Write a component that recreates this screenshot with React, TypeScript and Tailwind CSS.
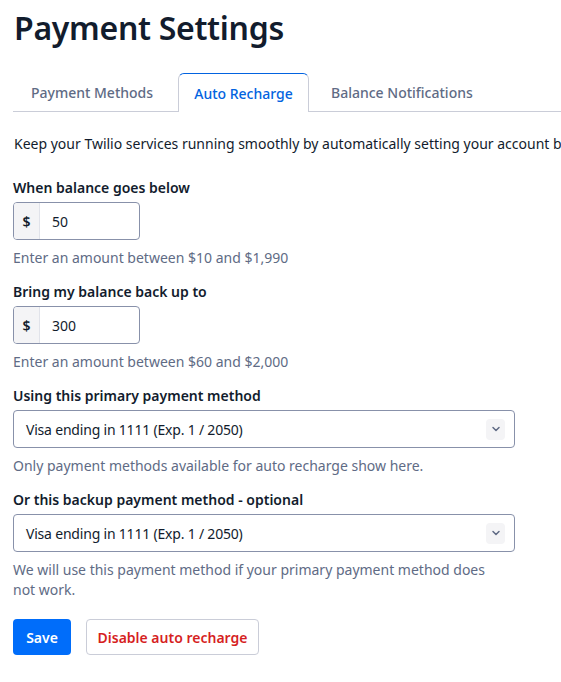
import { ChevronDown } from "lucide-react";

function AmountField({ label, value, help }: { label: string; value: string; help: string }) {
  return (
    <div className="flex flex-col">
      <label className="text-[14px] font-semibold leading-[20px] text-[#121c2d]">{label}</label>
      <div className="mt-[4px] flex h-[38px] w-[127px] overflow-hidden rounded-[4px] border border-[#8891aa] bg-white">
        <div className="flex w-[26px] items-center justify-center border-r border-[#e1e3ea] bg-[#f4f4f6] text-[14px] font-semibold text-[#121c2d]">
          $
        </div>
        <div className="flex items-center pl-[12px] text-[14px] text-[#121c2d]">{value}</div>
      </div>
      <p className="mt-[8px] text-[14px] leading-[20px] text-[#606b85]">{help}</p>
    </div>
  );
}

function SelectField({ label, help }: { label: string; help: React.ReactNode }) {
  return (
    <div className="flex flex-col">
      <label className="text-[14px] font-semibold leading-[20px] text-[#121c2d]">{label}</label>
      <div className="mt-[4px] flex h-[38px] w-[502px] items-center justify-between rounded-[4px] border border-[#8891aa] bg-white pl-[12px] pr-[9px]">
        <span className="text-[14px] tracking-[-0.2px] text-[#121c2d]">Visa ending in 1111 (Exp. 1 / 2050)</span>
        <span className="flex h-[21px] w-[19px] items-center justify-center rounded-[4px] bg-[#f4f4f6]">
          <ChevronDown size={12} strokeWidth={3} className="text-[#606b85]" />
        </span>
      </div>
      <p className="mt-[8px] w-[490px] text-[14px] leading-[20px] text-[#606b85]">{help}</p>
    </div>
  );
}

export default function App() {
  return (
    <div className="min-h-screen w-[561px] overflow-hidden bg-white font-['Noto_Sans',_sans-serif] text-[#121c2d]">
      <div className="pl-[14px] pt-[6px]">
        <h1 className="text-[32px] font-semibold leading-[44px] tracking-[-0.3px] text-[#121c2d]">Payment Settings</h1>
      </div>

      <div className="ml-[13px] mt-[23px] flex h-[39px] items-end border-b border-[#cacdd8]">
        <div className="flex h-full w-[165px] items-center pl-[18px] text-[14px] font-medium text-[#606b85]">Payment Methods</div>
        <div className="relative -mb-px flex h-[39px] w-[131px] items-center justify-center rounded-t-[6px] border border-b-0 border-[#cacdd8] border-t-[#0263e0] bg-white text-[14px] font-medium text-[#0263e0]">
          Auto Recharge
        </div>
        <div className="flex h-full items-center pl-[22px] text-[14px] font-medium text-[#606b85]">Balance Notifications</div>
      </div>

      <p className="mt-[22px] whitespace-nowrap pl-[14px] text-[14px] leading-[20px] text-[#121c2d]">
        Keep your Twilio services running smoothly by automatically setting your account balance to recharge.
      </p>

      <div className="mt-[24px] flex flex-col gap-[14px] pl-[13px]">
        <AmountField label="When balance goes below" value="50" help="Enter an amount between $10 and $1,990" />
        <AmountField label="Bring my balance back up to" value="300" help="Enter an amount between $60 and $2,000" />
        <SelectField label="Using this primary payment method" help="Only payment methods available for auto recharge show here." />
        <SelectField
          label="Or this backup payment method - optional"
          help="We will use this payment method if your primary payment method does not work."
        />
      </div>

      <div className="mt-[19px] flex gap-[15px] pl-[13px]">
        <button className="h-[36px] w-[58px] rounded-[4px] bg-[#006dfa] text-[14px] font-semibold text-white">Save</button>
        <button className="h-[36px] w-[173px] rounded-[4px] border border-[#cacdd8] bg-white text-[14px] font-semibold text-[#d61f1f]">
          Disable auto recharge
        </button>
      </div>
    </div>
  );
}
